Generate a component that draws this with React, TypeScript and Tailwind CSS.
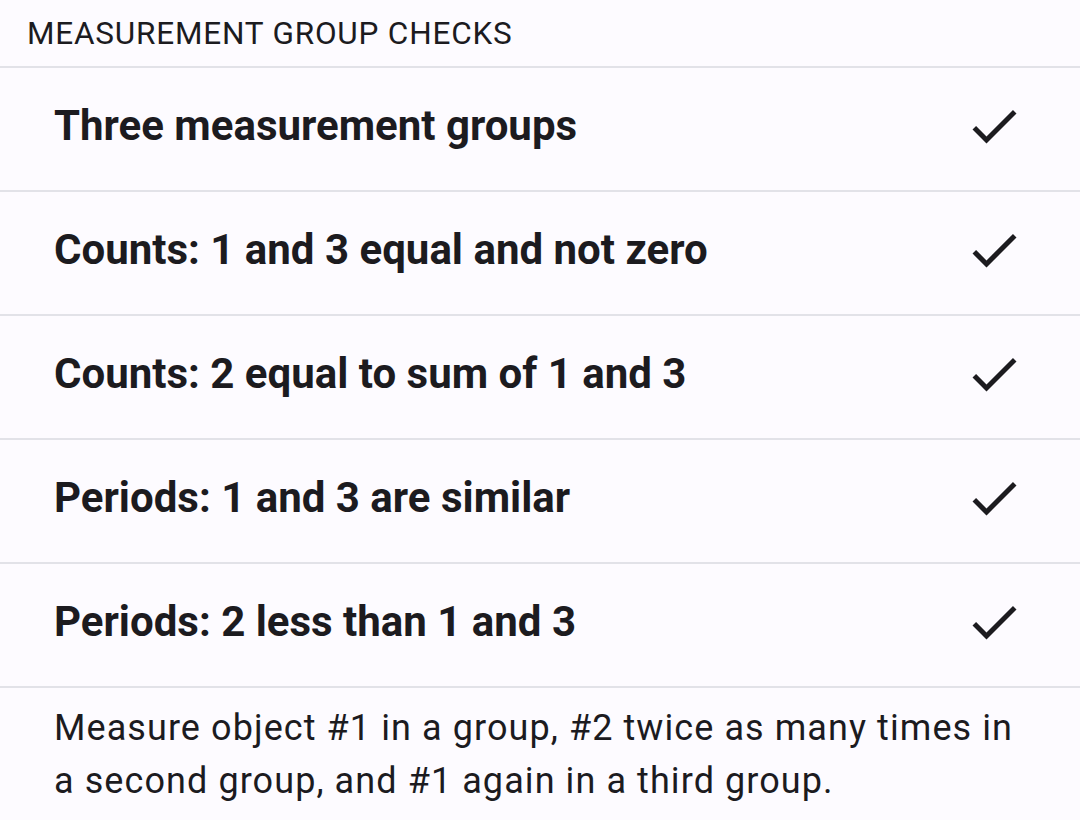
const checks = [
  "Three measurement groups",
  "Counts: 1 and 3 equal and not zero",
  "Counts: 2 equal to sum of 1 and 3",
  "Periods: 1 and 3 are similar",
  "Periods: 2 less than 1 and 3",
];

function CheckIcon() {
  return (
    <svg viewBox="0 0 24 24" className="h-[60px] w-[60px] shrink-0" fill="#1c1b1f">
      <path d="M9 16.17L4.83 12l-1.42 1.41L9 19 21 7l-1.41-1.41z" />
    </svg>
  );
}

export default function App() {
  return (
    <div
      className="min-h-screen w-[1080px] bg-[#fdfbff] text-[#1c1b1f]"
      style={{ fontFamily: "Roboto, 'Noto Sans', sans-serif" }}
    >
      <div className="flex h-[66px] items-center px-[27px] pt-[2px] text-[31.5px] leading-none tracking-[0.8px]">
        MEASUREMENT GROUP CHECKS
      </div>
      {checks.map((c) => (
        <div
          key={c}
          className="flex h-[124px] items-center justify-between border-t-2 border-[#e2e2e8] pb-[6px] pl-[54px] pr-[56px]"
        >
          <span className="text-[42px] font-bold leading-none">{c}</span>
          <CheckIcon />
        </div>
      ))}
      <div className="border-t-2 border-[#e2e2e8] pl-[54px] pr-[54px] pt-[14px] text-[36px] leading-[53px] tracking-[0.03em]">
        Measure object #1 in a group, #2 twice as many times in a second group, and #1 again in a third group.
      </div>
    </div>
  );
}
